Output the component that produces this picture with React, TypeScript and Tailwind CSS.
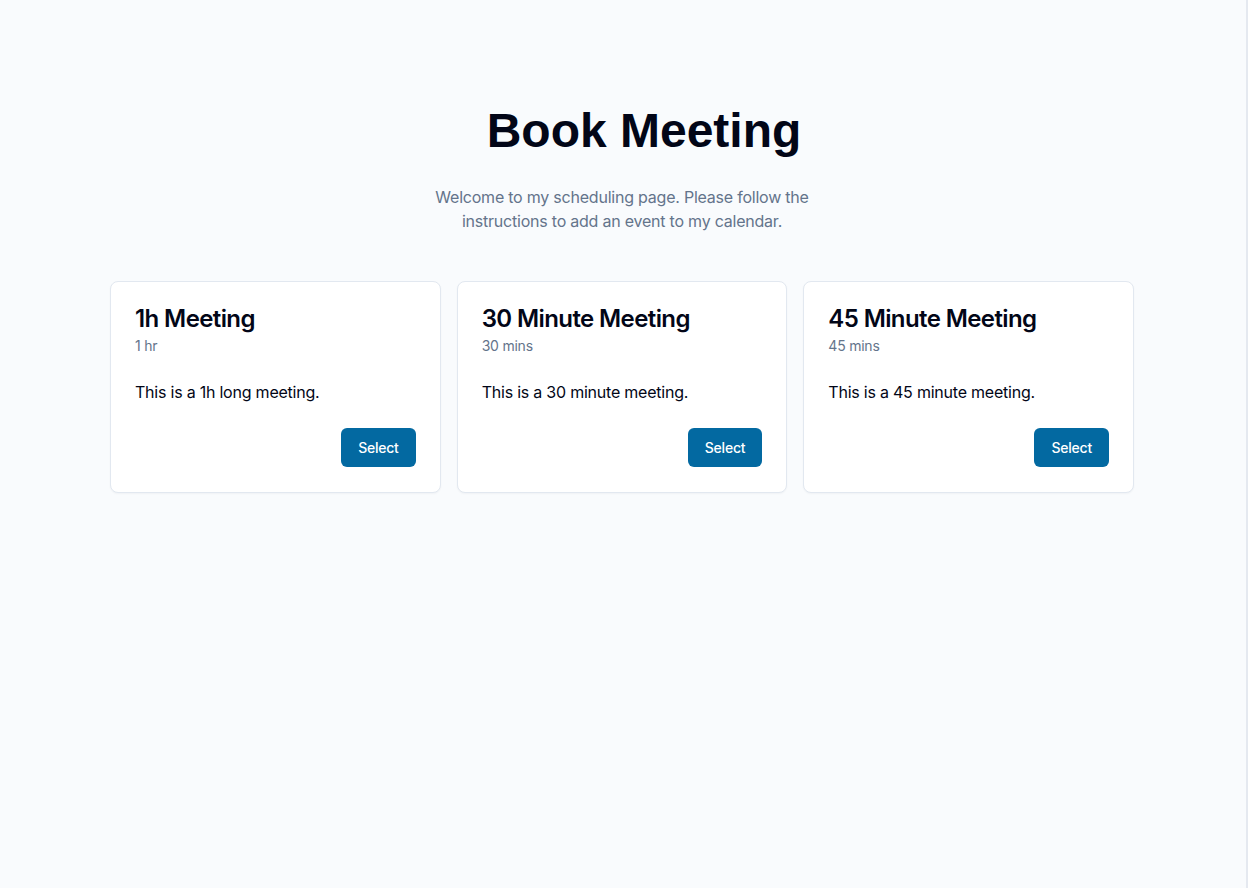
type MeetingType = {
  title: string;
  duration: string;
  description: string;
};

const meetingTypes: MeetingType[] = [
  { title: "1h Meeting", duration: "1 hr", description: "This is a 1h long meeting." },
  { title: "30 Minute Meeting", duration: "30 mins", description: "This is a 30 minute meeting." },
  { title: "45 Minute Meeting", duration: "45 mins", description: "This is a 45 minute meeting." },
];

function MeetingCard({ meeting }: { meeting: MeetingType }) {
  return (
    <div className="flex flex-col rounded-lg border border-[#e2e8f0] bg-white px-6 pt-[25px] pb-[25px] shadow-[0_1px_2px_rgba(15,23,42,0.04)]">
      <h2 className="text-2xl leading-6 font-semibold tracking-[-0.025em] text-[#020617]">{meeting.title}</h2>
      <p className="mt-[5px] text-sm leading-5 text-[#64748b]">{meeting.duration}</p>
      <p className="mt-6 text-base leading-6 text-[#020617]">{meeting.description}</p>
      <div className="mt-6 flex justify-end">
        <button
          type="button"
          className="h-[39px] rounded-md bg-[#0369a1] px-[17px] text-sm font-medium text-white"
        >
          Select
        </button>
      </div>
    </div>
  );
}

export default function App() {
  return (
    <div
      className="min-h-screen border-r-2 border-[#e5e9f0] bg-[#f9fbfd] pt-[107px] pr-[2px] tracking-[-0.014em]"
      style={{ fontFamily: "Inter, 'Noto Sans', sans-serif" }}
    >
      <div className="mx-auto max-w-5xl">
        <h1
          className="pl-[44px] text-center text-5xl leading-none font-bold tracking-normal text-[#020617]"
          style={{ fontFamily: "'Liberation Sans', Arial, sans-serif" }}
        >
          Book Meeting
        </h1>
        <p className="mx-auto mt-[30px] max-w-sm text-center text-base leading-6 text-[#64748b]">
          Welcome to my scheduling page. Please follow the instructions to add an event to my calendar.
        </p>
        <div className="mt-12 grid grid-cols-3 gap-4">
          {meetingTypes.map((meeting) => (
            <MeetingCard key={meeting.title} meeting={meeting} />
          ))}
        </div>
      </div>
    </div>
  );
}
